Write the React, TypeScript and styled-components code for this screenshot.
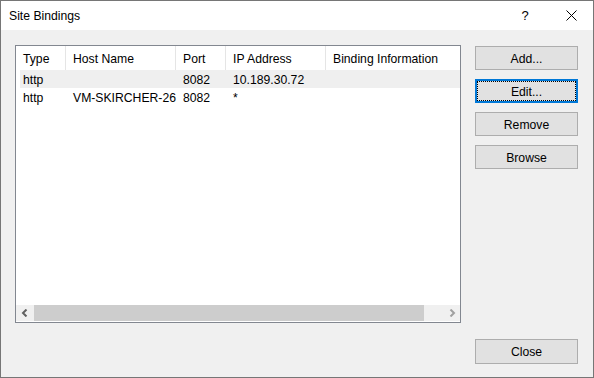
import React from "react";
import styled, { createGlobalStyle } from "styled-components";

const Global = createGlobalStyle`
  html, body { margin: 0; padding: 0; background: #ffffff; }
  body { font-family: "Liberation Sans", Arial, sans-serif; font-size: 12.2px; color: #000; }
  * { box-sizing: border-box; }
`;

const Window = styled.div`
  width: 594px;
  height: 378px;
  border: 1px solid #767676;
  display: flex;
  flex-direction: column;
  background: #f0f0f0;
`;

const TitleBar = styled.div`
  height: 29px;
  background: #ffffff;
  display: flex;
  align-items: center;
  flex-shrink: 0;
`;

const Title = styled.div`
  flex: 1;
  padding: 1px 0 0 8px;
  line-height: 28px;
`;

const CaptionButton = styled.div`
  width: 46px;
  height: 29px;
  display: flex;
  align-items: center;
  justify-content: center;
  font-size: 13px;
  padding-left: 2px;
`;

const Body = styled.div`
  flex: 1;
  display: grid;
  grid-template-columns: 446px 103px;
  column-gap: 14px;
  padding: 15px 15px 13px 14px;
`;

const ListBox = styled.div`
  height: 278px;
  border: 1px solid #828790;
  background: #ffffff;
  display: flex;
  flex-direction: column;
`;

const HeaderRow = styled.div`
  display: grid;
  grid-template-columns: 50px 110px 50px 100px 1fr;
  height: 24px;
  flex-shrink: 0;
`;

const HeaderCell = styled.div`
  padding: 2px 0 0 7px;
  line-height: 22px;
  border-right: 1px solid #e5e5e5;
  white-space: nowrap;
  &:last-child { border-right: none; }
`;

const Rows = styled.div`
  flex: 1;
`;

const Row = styled.div<{ $active?: boolean }>`
  display: grid;
  grid-template-columns: 46px 110px 50px 100px 1fr;
  margin-left: 4px;
  height: 18px;
  background: ${(p) => (p.$active ? "#efefef" : "transparent")};
`;

const Cell = styled.div`
  padding: 3px 0 0 7px;
  line-height: 15px;
  white-space: nowrap;
  &:first-child { padding-left: 3px; }
`;

const ScrollBar = styled.div`
  height: 16px;
  margin-bottom: 1px;
  background: #f0f0f0;
  display: flex;
  align-items: stretch;
  flex-shrink: 0;
`;

const Arrow = styled.div`
  width: 17px;
  display: flex;
  align-items: center;
  justify-content: center;
  flex-shrink: 0;
`;

const Track = styled.div`
  flex: 1;
  display: flex;
  align-items: stretch;
  padding: 0 19px 0 1px;
`;

const Thumb = styled.div`
  flex: 1;
  background: #cdcdcd;
`;

const Side = styled.div`
  display: flex;
  flex-direction: column;
  gap: 9px;
  padding-top: 1px;
`;

const Button = styled.div<{ $focused?: boolean }>`
  position: relative;
  height: 24px;
  padding-top: 1px;
  background: #e1e1e1;
  border: ${(p) => (p.$focused ? "2px solid #0078d7" : "1px solid #adadad")};
  display: flex;
  align-items: center;
  justify-content: center;
  ${(p) =>
    p.$focused
      ? `&::after {
    content: "";
    position: absolute;
    inset: 0px;
    border: 1px dotted #000;
  }`
      : ""}
`;

const CloseButton = styled(Button)`
  margin-top: auto;
  height: 25px;
`;

const headers = ["Type", "Host Name", "Port", "IP Address", "Binding Information"];
const data = [
  ["http", "", "8082", "10.189.30.72", ""],
  ["http", "VM-SKIRCHER-26", "8082", "*", ""],
];

export default function App() {
  return (
    <>
      <Global />
      <Window>
        <TitleBar>
          <Title>Site Bindings</Title>
          <CaptionButton>?</CaptionButton>
          <CaptionButton>
            <svg width="11" height="11" viewBox="0 0 11 11">
              <path d="M0.5 0.5 L10.5 10.5 M10.5 0.5 L0.5 10.5" stroke="#000" strokeWidth="1" />
            </svg>
          </CaptionButton>
        </TitleBar>
        <Body>
          <ListBox>
            <HeaderRow>
              {headers.map((h) => (
                <HeaderCell key={h}>{h}</HeaderCell>
              ))}
            </HeaderRow>
            <Rows>
              {data.map((r, i) => (
                <Row key={i} $active={i === 0}>
                  {r.map((c, j) => (
                    <Cell key={j}>{c}</Cell>
                  ))}
                </Row>
              ))}
            </Rows>
            <ScrollBar>
              <Arrow>
                <svg width="8" height="8" viewBox="0 0 8 8">
                  <path d="M5.5 0.5 L2 4 L5.5 7.5" stroke="#606060" strokeWidth="2" fill="none" />
                </svg>
              </Arrow>
              <Track>
                <Thumb />
              </Track>
              <Arrow>
                <svg width="8" height="8" viewBox="0 0 8 8">
                  <path d="M2.5 0.5 L6 4 L2.5 7.5" stroke="#a0a0a0" strokeWidth="2" fill="none" />
                </svg>
              </Arrow>
            </ScrollBar>
          </ListBox>
          <Side>
            <Button>Add...</Button>
            <Button $focused>Edit...</Button>
            <Button>Remove</Button>
            <Button>Browse</Button>
            <CloseButton>Close</CloseButton>
          </Side>
        </Body>
      </Window>
    </>
  );
}
